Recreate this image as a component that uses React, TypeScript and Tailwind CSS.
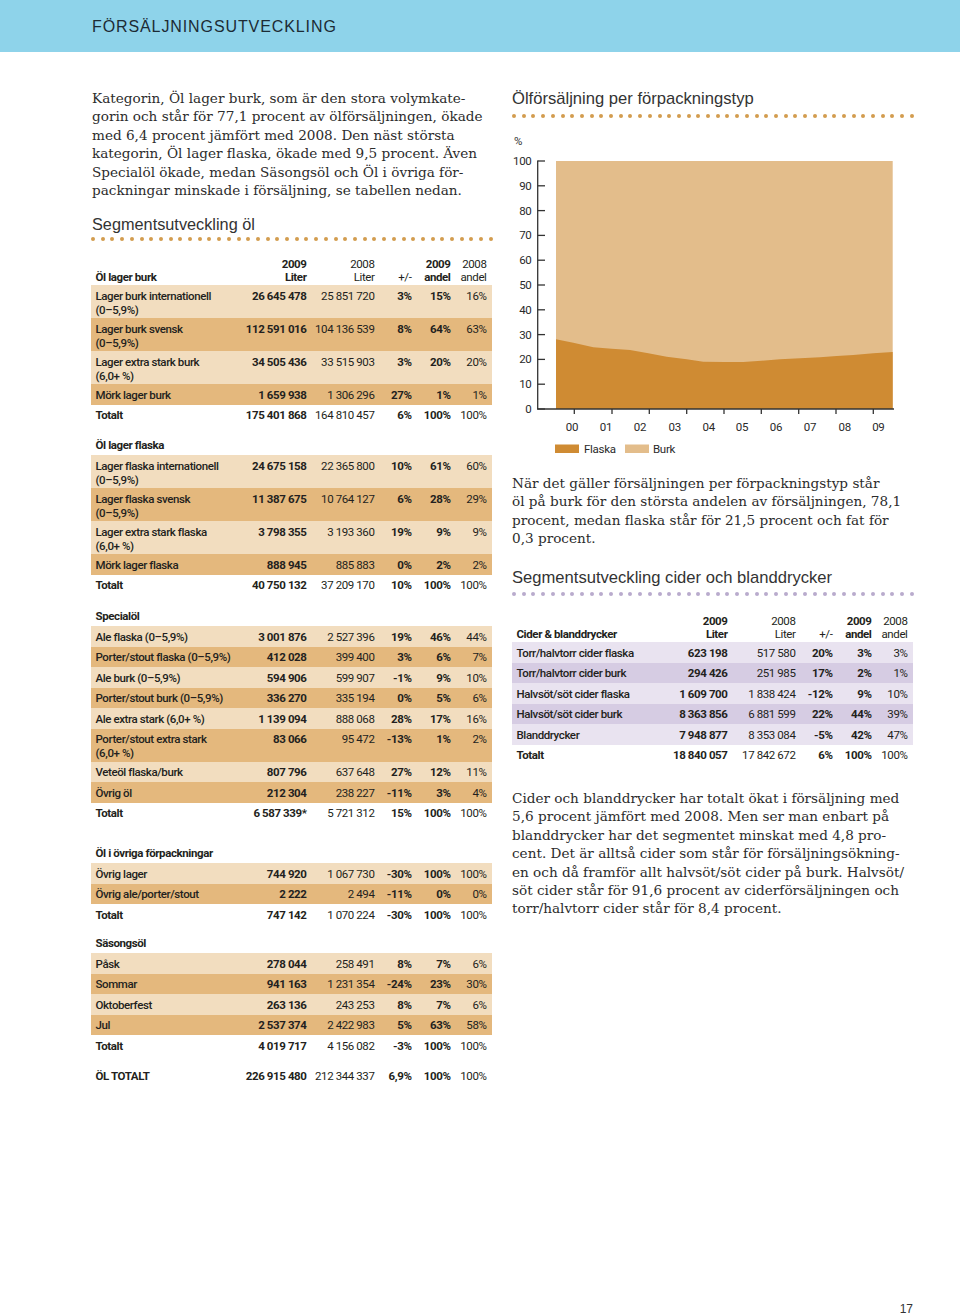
import React from 'react';

type Vals = [string, string, string, string, string];
type Row = { label: string[]; v: Vals };
type Section = { title?: string; rows: Row[]; total?: Vals; gap: string };

// Tabellkolumner: etikett + 5 sifferkolumner (2009 Liter, 2008 Liter, +/-, 2009 andel, 2008 andel)
const COLS = 'grid grid-cols-[1fr_65.5px_68px_37px_39px_36px] pl-[4.5px] pr-[5.5px]';
const WEIGHTS = ['font-bold', 'font-normal', 'font-bold', 'font-bold', 'font-normal'];
const TABLE_FONT = "font-['Roboto',_'Liberation_Sans',_sans-serif] text-[11.5px] tracking-[-0.4px] text-[#231f20]";
const SERIF = "font-['DejaVu_Serif',_serif] text-[13.6px] leading-[18.4px] text-[#2c2c2c]";
const SANS = "font-['Liberation_Sans',_sans-serif]";

const r = (label: string | string[], ...v: string[]): Row => ({
  label: Array.isArray(label) ? label : [label],
  v: v as Vals,
});

const BEER: Section[] = [
  {
    rows: [
      r(['Lager burk internationell', '(0–5,9%)'], '26 645 478', '25 851 720', '3%', '15%', '16%'),
      r(['Lager burk svensk', '(0–5,9%)'], '112 591 016', '104 136 539', '8%', '64%', '63%'),
      r(['Lager extra stark burk', '(6,0+ %)'], '34 505 436', '33 515 903', '3%', '20%', '20%'),
      r('Mörk lager burk', '1 659 938', '1 306 296', '27%', '1%', '1%'),
    ],
    total: ['175 401 868', '164 810 457', '6%', '100%', '100%'],
    gap: '',
  },
  {
    title: 'Öl lager flaska',
    rows: [
      r(['Lager flaska internationell', '(0–5,9%)'], '24 675 158', '22 365 800', '10%', '61%', '60%'),
      r(['Lager flaska svensk', '(0–5,9%)'], '11 387 675', '10 764 127', '6%', '28%', '29%'),
      r(['Lager extra stark flaska', '(6,0+ %)'], '3 798 355', '3 193 360', '19%', '9%', '9%'),
      r('Mörk lager flaska', '888 945', '885 883', '0%', '2%', '2%'),
    ],
    total: ['40 750 132', '37 209 170', '10%', '100%', '100%'],
    gap: 'mt-[9.5px]',
  },
  {
    title: 'Specialöl',
    rows: [
      r('Ale flaska (0–5,9%)', '3 001 876', '2 527 396', '19%', '46%', '44%'),
      r('Porter/stout flaska (0–5,9%)', '412 028', '399 400', '3%', '6%', '7%'),
      r('Ale burk (0–5,9%)', '594 906', '599 907', '-1%', '9%', '10%'),
      r('Porter/stout burk (0–5,9%)', '336 270', '335 194', '0%', '5%', '6%'),
      r('Ale extra stark (6,0+ %)', '1 139 094', '888 068', '28%', '17%', '16%'),
      r(['Porter/stout extra stark', '(6,0+ %)'], '83 066', '95 472', '-13%', '1%', '2%'),
      r('Veteöl flaska/burk', '807 796', '637 648', '27%', '12%', '11%'),
      r('Övrig öl', '212 304', '238 227', '-11%', '3%', '4%'),
    ],
    total: ['6 587 339*', '5 721 312', '15%', '100%', '100%'],
    gap: 'mt-[10.5px]',
  },
  {
    title: 'Öl i övriga förpackningar',
    rows: [
      r('Övrig lager', '744 920', '1 067 730', '-30%', '100%', '100%'),
      r('Övrig ale/porter/stout', '2 222', '2 494', '-11%', '0%', '0%'),
    ],
    total: ['747 142', '1 070 224', '-30%', '100%', '100%'],
    gap: 'mt-[19.5px]',
  },
  {
    title: 'Säsongsöl',
    rows: [
      r('Påsk', '278 044', '258 491', '8%', '7%', '6%'),
      r('Sommar', '941 163', '1 231 354', '-24%', '23%', '30%'),
      r('Oktoberfest', '263 136', '243 253', '8%', '7%', '6%'),
      r('Jul', '2 537 374', '2 422 983', '5%', '63%', '58%'),
    ],
    total: ['4 019 717', '4 156 082', '-3%', '100%', '100%'],
    gap: 'mt-[8px]',
  },
];

const CIDER: Row[] = [
  r('Torr/halvtorr cider flaska', '623 198', '517 580', '20%', '3%', '3%'),
  r('Torr/halvtorr cider burk', '294 426', '251 985', '17%', '2%', '1%'),
  r('Halvsöt/söt cider flaska', '1 609 700', '1 838 424', '-12%', '9%', '10%'),
  r('Halvsöt/söt cider burk', '8 363 856', '6 881 599', '22%', '44%', '39%'),
  r('Blanddrycker', '7 948 877', '8 353 084', '-5%', '42%', '47%'),
];

function Dots({ color }: { color: string }) {
  return (
    <div className="flex h-[4px] w-[402px] justify-between">
      {Array.from({ length: 42 }).map((_, i) => (
        <span key={i} className={`h-[4px] w-[4px] rounded-full ${color}`} />
      ))}
    </div>
  );
}

function Header({ label }: { label: string }) {
  return (
    <div className={`${COLS} h-[28px] pt-[1px] leading-[13px]`}>
      <div className="whitespace-nowrap pt-[13px] font-bold">{label}</div>
      <div className="text-right font-bold">2009<br />Liter</div>
      <div className="text-right">2008<br />Liter</div>
      <div className="pt-[13px] text-right">+/-</div>
      <div className="text-right font-bold">2009<br />andel</div>
      <div className="text-right">2008<br />andel</div>
    </div>
  );
}

function DataRow({ row, bg }: { row: Row; bg: string }) {
  return (
    <div className={`${COLS} ${row.label.length > 1 ? 'h-[33px]' : 'h-[20.5px]'} ${bg} pt-[3.5px] leading-[14px]`}>
      <div className="font-medium">
        {row.label.map((l, i) => (
          <div key={i} className="whitespace-nowrap">{l}</div>
        ))}
      </div>
      {row.v.map((v, i) => (
        <div key={i} className={`whitespace-nowrap text-right ${WEIGHTS[i]}`}>
          {v}
        </div>
      ))}
    </div>
  );
}

function TotalRow({ label, v }: { label: string; v: Vals }) {
  return (
    <div className={`${COLS} h-[20.5px] pt-[3.5px] leading-[14px]`}>
      <div className="whitespace-nowrap font-bold">{label}</div>
      {v.map((x, i) => (
        <div key={i} className={`whitespace-nowrap text-right ${WEIGHTS[i]}`}>
          {x}
        </div>
      ))}
    </div>
  );
}

function Title({ text }: { text: string }) {
  return <div className="h-[20.5px] whitespace-nowrap pl-[4.5px] pt-[3.5px] font-bold leading-[14px]">{text}</div>;
}

const BEER_BG = ['bg-[#f2ddbf]', 'bg-[#e4b87d]'];
const CIDER_BG = ['bg-[#e9e3f0]', 'bg-[#d6cce3]'];

function Chart() {
  const flaska: [number, number][] = [
    [44, 211.3], [61.3, 214.7], [81.3, 219.3], [99.7, 220.7], [118, 222], [136.3, 225.3],
    [154.7, 228.7], [174.7, 231.3], [191.3, 233.7], [212, 234], [231.3, 234], [249.3, 232.7],
    [268, 231.3], [288, 230.3], [308, 229.3], [324.7, 228], [341.3, 227], [361.3, 225.3], [380.7, 224],
  ];
  const d = `M44 281 ${flaska.map(([x, y]) => `L${x} ${y}`).join(' ')} L380.7 281 Z`;
  const yLabels = [100, 90, 80, 70, 60, 50, 40, 30, 20, 10, 0];
  const xTicks = [62.3, 100, 137.3, 174.7, 212, 249.3, 286.7, 324, 361.3];
  const xLabels = ['00', '01', '02', '03', '04', '05', '06', '07', '08', '09'];
  const xPos = [60, 94, 128, 162.7, 196.7, 230, 264, 298, 332.7, 366.3];
  const font = { fontFamily: 'Roboto, "Liberation Sans", sans-serif', fontSize: 11.5, letterSpacing: -0.3 };
  return (
    <svg width="403" height="346" className="mt-[10px] block">
      <text x="2" y="17" fill="#333" style={font}>%</text>
      <rect x="44" y="33" width="336.7" height="248" fill="#e3bd8b" />
      <path d={d} fill="#cf8b33" />
      {yLabels.map((v) => {
        const y = 33 + (100 - v) * 2.48;
        return (
          <g key={v}>
            <text x="19.5" y={y + 4} textAnchor="end" fill="#2a2a2a" style={font}>{v}</text>
            <line x1="25.7" y1={y} x2="33" y2={y} stroke="#333" strokeWidth="1.3" />
          </g>
        );
      })}
      <line x1="25.7" y1="32.4" x2="25.7" y2="281" stroke="#333" strokeWidth="1.3" />
      <line x1="25" y1="281" x2="382" y2="281" stroke="#333" strokeWidth="1.5" />
      {xTicks.map((x) => (
        <line key={x} x1={x} y1="281" x2={x} y2="286" stroke="#333" strokeWidth="1.3" />
      ))}
      {xLabels.map((l, i) => (
        <text key={l} x={xPos[i]} y="302.5" textAnchor="middle" fill="#2a2a2a" style={font}>{l}</text>
      ))}
      <rect x="43" y="316.5" width="24" height="8.5" fill="#cf8b33" />
      <text x="72" y="325" fill="#2a2a2a" style={font}>Flaska</text>
      <rect x="113" y="316.5" width="24" height="8.5" fill="#e3bd8b" />
      <text x="141" y="325" fill="#2a2a2a" style={font}>Burk</text>
    </svg>
  );
}

function Lines({ lines, className }: { lines: string[]; className: string }) {
  return (
    <div className={className}>
      {lines.map((l, i) => (
        <div key={i} className="whitespace-nowrap">{l}</div>
      ))}
    </div>
  );
}

export default function App() {
  return (
    <div className="relative flex h-[1316px] w-[960px] flex-col bg-white">
      <div className={`flex h-[52px] items-center bg-[#8ed3ea] pl-[92px] pt-[2px] ${SANS} text-[16px] tracking-[0.9px] text-[#1c2b34]`}>
        FÖRSÄLJNINGSUTVECKLING
      </div>

      <div className="flex gap-[20px] pl-[91px] pt-[37px]">
        {/* Vänster kolumn: text + segmentstabell öl */}
        <div className="w-[401px]">
          <Lines
            className={`${SERIF} pl-[1px]`}
            lines={[
              'Kategorin, Öl lager burk, som är den stora volymkate-',
              'gorin och står för 77,1 procent av ölförsäljningen, ökade',
              'med 6,4 procent jämfört med 2008. Den näst största',
              'kategorin, Öl lager flaska, ökade med 9,5 procent. Även',
              'Specialöl ökade, medan Säsongsöl och Öl i övriga för-',
              'packningar minskade i försäljning, se tabellen nedan.',
            ]}
          />
          <div className={`mt-[14.8px] h-[20px] pl-[1px] ${SANS} text-[16.3px] leading-[20px] text-[#333]`}>
            Segmentsutveckling öl
          </div>
          <div className="mt-[3px]">
            <Dots color="bg-[#d39c4f]" />
          </div>
          <div className={`mt-[16px] ${TABLE_FONT}`}>
            {BEER.map((s, si) => (
              <div key={si} className={s.gap}>
                {si === 0 ? <Header label="Öl lager burk" /> : <Title text={s.title!} />}
                {s.rows.map((row, i) => (
                  <DataRow key={i} row={row} bg={BEER_BG[i % 2]} />
                ))}
                {s.total && <TotalRow label="Totalt" v={s.total} />}
              </div>
            ))}
            <div className="mt-[10px]">
              <TotalRow label="ÖL TOTALT" v={['226 915 480', '212 344 337', '6,9%', '100%', '100%']} />
            </div>
          </div>
        </div>

        {/* Höger kolumn: diagram + cider */}
        <div className="w-[403px]">
          <div className={`h-[20px] ${SANS} text-[16.6px] leading-[20px] text-[#333]`}>
            Ölförsäljning per förpackningstyp
          </div>
          <div className="mt-[5px]">
            <Dots color="bg-[#d39c4f]" />
          </div>
          <Chart />
          <Lines
            className={SERIF}
            lines={[
              'När det gäller försäljningen per förpackningstyp står',
              'öl på burk för den största andelen av försäljningen, 78,1',
              'procent, medan flaska står för 21,5 procent och fat för',
              '0,3 procent.',
            ]}
          />
          <div className={`mt-[20.6px] h-[20px] ${SANS} text-[16.6px] leading-[20px] text-[#333]`}>
            Segmentsutveckling cider och blanddrycker
          </div>
          <div className="mt-[4px]">
            <Dots color="bg-[#b9abcd]" />
          </div>
          <div className={`mt-[18px] w-[401px] ${TABLE_FONT}`}>
            <Header label="Cider & blanddrycker" />
            {CIDER.map((row, i) => (
              <DataRow key={i} row={row} bg={CIDER_BG[i % 2]} />
            ))}
            <TotalRow label="Totalt" v={['18 840 057', '17 842 672', '6%', '100%', '100%']} />
          </div>
          <Lines
            className={`mt-[23.8px] ${SERIF}`}
            lines={[
              'Cider och blanddrycker har totalt ökat i försäljning med',
              '5,6 procent jämfört med 2008. Men ser man enbart på',
              'blanddrycker har det segmentet minskat med 4,8 pro-',
              'cent. Det är alltså cider som står för försäljningsökning-',
              'en och då framför allt halvsöt/söt cider på burk. Halvsöt/',
              'söt cider står för 91,6 procent av ciderförsäljningen och',
              'torr/halvtorr cider står för 8,4 procent.',
            ]}
          />
        </div>
      </div>

      <div className={`mt-auto h-[14px] pr-[47px] text-right ${SANS} text-[12px] leading-[14px] text-[#333]`}>17</div>
    </div>
  );
}
